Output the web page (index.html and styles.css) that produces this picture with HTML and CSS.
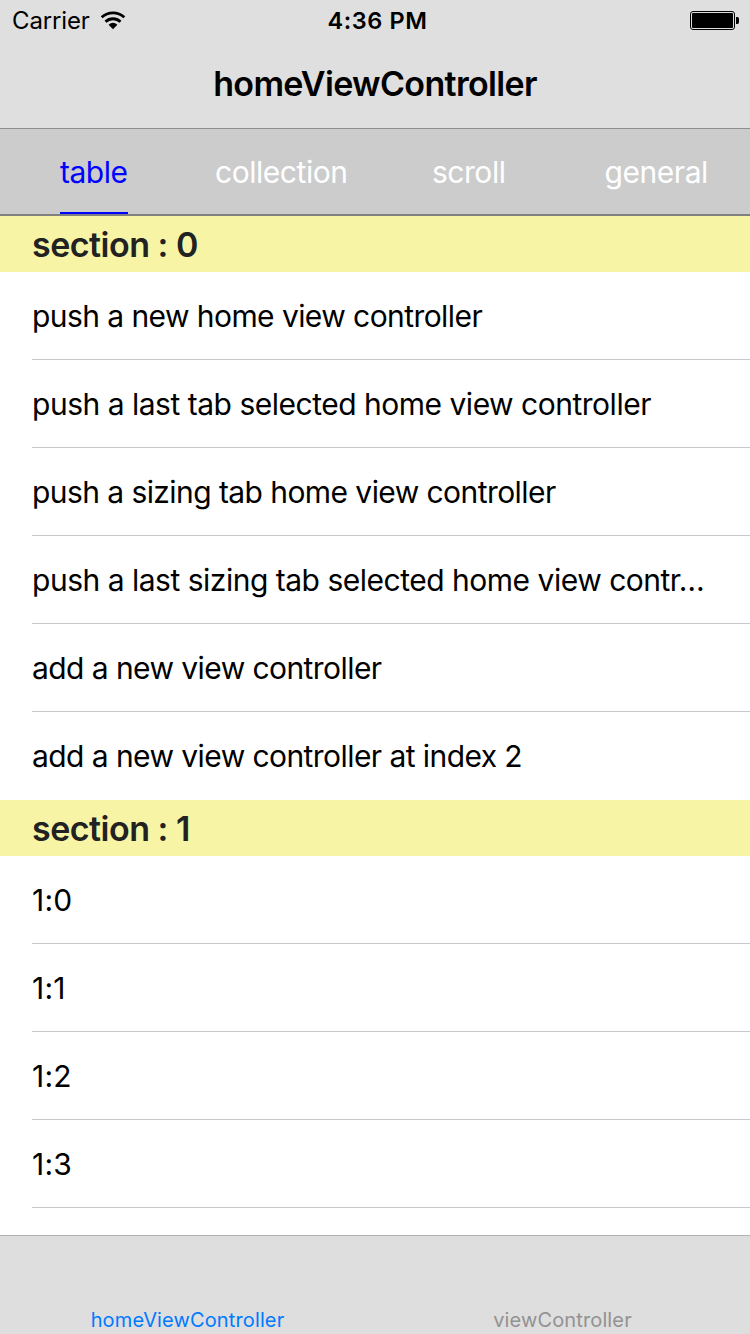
FILE: index.html
```html
<!DOCTYPE html>
<html lang="en">
<head>
<meta charset="utf-8">
<title>homeViewController</title>
<link rel="stylesheet" href="styles.css">
</head>
<body>
<div class="screen">
  <header class="top">
    <div class="status">
      <div class="carrier"><span class="carrier-name">Carrier</span>
        <svg class="wifi" width="26" height="20" viewBox="0 0 26 20"><path d="M13 18.200 8.600 13.700Q13 9.900 17.400 13.700Z"/><path class="arc" d="M5.500 10.800a10.800 10.800 0 0 1 15 0M1.700 6.300a16.800 16.800 0 0 1 22.600 0"/></svg>
      </div>
      <span class="time">4:36 PM</span>
      <svg class="battery" width="50" height="20" viewBox="0 0 50 20"><rect class="shell" x=".5" y=".5" width="44" height="18" rx="2.5"/><rect x="2" y="2" width="41" height="15" rx="1"/><path d="M46 6h1.500q1.500 0 1.500 2v3q0 2-1.500 2H46Z"/></svg>
    </div>
    <h1 class="title"><span>homeViewController</span></h1>
  </header>
  <nav class="tabs">
    <div class="tab active"><span>table</span></div>
    <div class="tab"><span>collection</span></div>
    <div class="tab"><span>scroll</span></div>
    <div class="tab"><span>general</span></div>
  </nav>
  <main class="list">
    <h2 class="section"><span>section : 0</span></h2>
    <div class="row"><span>push a new home view controller</span></div>
    <div class="row long"><span>push a last tab selected home view controller</span></div>
    <div class="row"><span>push a sizing tab home view controller</span></div>
    <div class="row long"><span>push a last sizing tab selected home view contr…</span></div>
    <div class="row"><span>add a new view controller</span></div>
    <div class="row last"><span>add a new view controller at index 2</span></div>
    <h2 class="section"><span>section : 1</span></h2>
    <div class="row num"><span>1:0</span></div>
    <div class="row num"><span>1:1</span></div>
    <div class="row num"><span>1:2</span></div>
    <div class="row num"><span>1:3</span></div>
  </main>
  <footer class="bottom">
    <div class="item selected"><span>homeViewController</span></div>
    <div class="item"><span>viewController</span></div>
  </footer>
</div>
</body>
</html>
```
FILE: styles.css
```css
* { box-sizing: border-box; }
body { margin: 0; font-family: Inter, "Liberation Sans", sans-serif; color: #000; }
.screen { width: 750px; height: 1334px; display: flex; flex-direction: column; overflow: hidden; background: #fff; }
.top { height: 129px; background: #dfdfdf; border-bottom: 1px solid #8e8e8e; }
.status { height: 41px; display: grid; grid-template-columns: 1fr auto 1fr; align-items: center; padding: 0 10px 0 12px; font-size: 24px; }
.status svg { margin-top: 1px; }
.carrier { display: flex; align-items: center; gap: 10px; }
.carrier-name { letter-spacing: -.15px; }
.time { font-weight: 600; font-size: 23.5px; letter-spacing: .6px; padding-left: 3px; }
.battery { justify-self: end; }
.arc, .shell { fill: none; stroke: #000; }
.arc { stroke-width: 2.8; }
.title { margin: 0; height: 85px; display: flex; align-items: center; justify-content: center; font-size: 34px; font-weight: 600; letter-spacing: -.66px; }
.tabs { height: 87px; display: grid; grid-template-columns: repeat(4, 1fr); background: #ccc; border-bottom: 2px solid #808080; font-size: 30px; letter-spacing: -.45px; color: #fff; }
.tab { display: flex; justify-content: center; }
.tab span { height: 85px; line-height: 87px; }
.active span { color: #00f; border-bottom: 2px solid #00f; }
.list { flex: 1; overflow: hidden; }
.section { margin: 0; padding-left: 32px; height: 56px; line-height: 58px; background: #f7f5a5; color: #222; font-size: 34px; font-weight: 600; letter-spacing: -.5px; }
.row { height: 88px; margin-left: 32px; line-height: 89px; border-bottom: 1px solid #c8c7cc; font-size: 30px; letter-spacing: -.57px; white-space: nowrap; }
.row.long { letter-spacing: -.49px; }
.row.num { letter-spacing: .2px; }
.row.last { border: 0; }
.bottom { height: 99px; display: grid; grid-template-columns: 1fr 1fr; background: #dedede; border-top: 1px solid #b2b2b2; font-size: 20px; letter-spacing: .13px; }
.item { display: flex; justify-content: center; align-items: flex-end; padding-bottom: 2px; color: #929292; }
.selected { color: #007aff; }
```
